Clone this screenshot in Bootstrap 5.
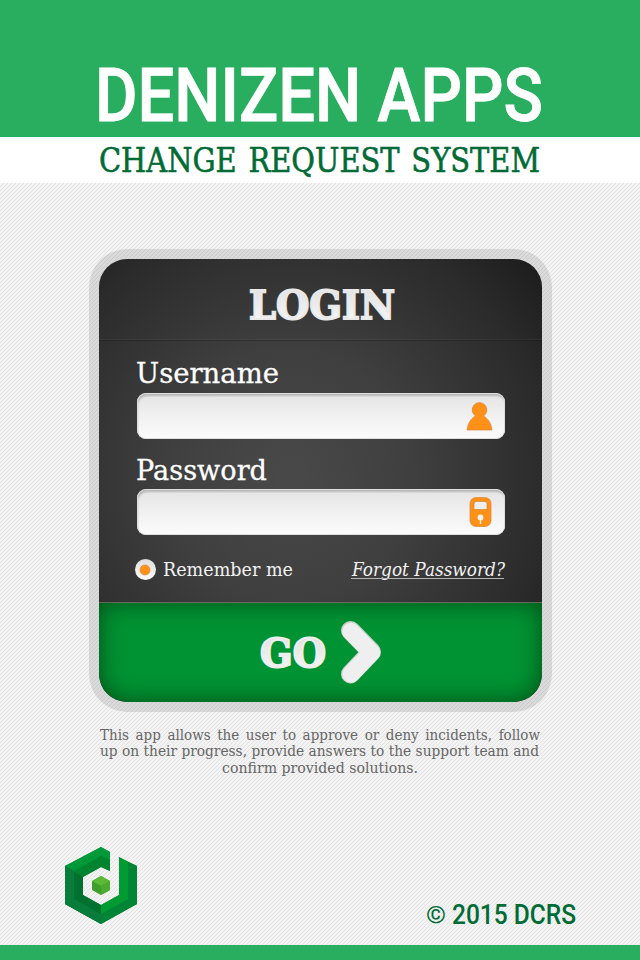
<!DOCTYPE html>
<html lang="en">
<head>
<meta charset="utf-8">
<meta name="viewport" content="width=device-width, initial-scale=1">
<title>Denizen Apps - Change Request System</title>
<link href="https://cdn.jsdelivr.net/npm/bootstrap@5.3.0/dist/css/bootstrap.min.css" rel="stylesheet">
<style>
  body { width: 640px; height: 960px; overflow: hidden; font-family: "DejaVu Serif", serif;
    background: repeating-linear-gradient(135deg, #f3f3f3 0, #f3f3f3 2px, #e2e2e2 2px, #e2e2e2 2.828px); }
  svg { display: block; overflow: visible; }
  svg text { white-space: pre; }
  .brand-bar { height: 137px; background: #29ae60; }
  .sub-bar { height: 46px; background: #fff; }
  .base-bar { height: 15px; background: #29ae60; }
  .slab { font-family: "DejaVu Serif", serif; }
  .sans { font-family: Roboto, sans-serif; }
  .login-frame { width: 463px; height: 463px; margin: 66px 0 0 89px; padding: 10px; border-radius: 38px; background: rgba(0,0,0,.1); }
  .login-panel { height: 443px; border-radius: 28px; overflow: hidden;
    background: radial-gradient(circle 330px at 43% 49%, #494949 0, #3f3f3f 38%, #2b2b2b 78%, #1c1c1c 100%); }
  .panel-head { height: 82px; border-bottom: 1px solid rgba(0,0,0,.22); box-shadow: inset 0 -1px rgba(255,255,255,.05); }
  .panel-fields { height: 261px; padding: 0 37px 0 38px; }
  .user-label { height: 52px; }
  .pass-label { height: 50px; }
  .field-box { height: 46px; border-radius: 9px; padding-right: 12px; background: linear-gradient(#e4e4e4, #fcfcfc);
    box-shadow: inset 0 0 0 1px #dedede, inset 1px 3px 2px rgba(0,0,0,.2); }
  .go-btn { height: 100px; border: 0; border-top: 1px solid #5e6a60; border-radius: 0 0 28px 28px; background: #009333; box-shadow: inset 0 0 24px rgba(0,50,10,.7); }
  .about { margin: 16px 0 0 100px; }
</style>
</head>
<body class="d-flex flex-column">
<header>
  <h1 class="brand-bar m-0">
    <svg width="640" height="137"><text class="sans" x="95" y="121" font-size="74.500" font-weight="500" fill="#fff" stroke="#fff" stroke-width=".8" textLength="448" lengthAdjust="spacingAndGlyphs">DENIZEN APPS</text></svg>
  </h1>
  <h2 class="sub-bar m-0">
    <svg width="640" height="46"><text class="slab" x="99" y="35" font-size="33" font-weight="400" fill="#006b35" stroke="#006b35" stroke-width=".6" word-spacing="3" textLength="441" lengthAdjust="spacingAndGlyphs">CHANGE REQUEST SYSTEM</text></svg>
  </h2>
</header>
<main>
  <form class="login-frame">
    <div class="login-panel d-flex flex-column">
      <div class="panel-head">
        <svg width="443" height="81">
          <defs>
            <linearGradient id="paper" x1="0" y1="0" x2="0" y2="1"><stop offset="0" stop-color="#dedede"/><stop offset="1" stop-color="#fafafa"/></linearGradient>
          </defs>
          <text class="slab" x="150" y="60" font-size="40" font-weight="700" fill="url(#paper)" stroke="#e9e9e9" stroke-width="2" textLength="146" lengthAdjust="spacingAndGlyphs">LOGIN</text>
        </svg>
      </div>
      <div class="panel-fields">
        <div class="user-label"><svg width="368" height="52"><text class="slab" x="-1" y="42" font-size="27" fill="#fff" stroke="#fff" stroke-width=".3" textLength="143" lengthAdjust="spacingAndGlyphs">Username</text></svg></div>
        <div class="field-box d-flex align-items-center justify-content-end">
          <svg width="27" height="32" viewBox="0 0 27 32"><path d="M1 30C2 23 5 18.500 9.500 16A7.300 7.300 0 1 1 17.500 16C22 18.500 25 23 26 30Z" fill="#ff9118" stroke="#d98736" stroke-width=".7"/></svg>
        </div>
        <div class="pass-label"><svg width="368" height="50"><text class="slab" x="-1" y="41" font-size="27" fill="#fff" stroke="#fff" stroke-width=".3" textLength="131" lengthAdjust="spacingAndGlyphs">Password</text></svg></div>
        <div class="field-box d-flex align-items-center justify-content-end">
          <svg width="24" height="30" viewBox="0 0 24 30"><rect x="1" y=".5" width="21" height="29" rx="6" fill="#ff9118" stroke="#d98736" stroke-width=".7"/><path d="M5 12.500V7Q5 4.500 7.500 4.500H15.500Q18 4.500 18 7V12.500Z" fill="#eee" stroke="#d07d25" stroke-width=".6"/><circle cx="11.500" cy="20.500" r="2.900" fill="#f3f3f3"/><path d="M11.500 22V27" stroke="#f3f3f3" stroke-width="1.300"/></svg>
        </div>
        <div class="d-flex">
          <svg width="368" height="60">
            <circle cx="8.500" cy="34.500" r="10.500" fill="url(#paper)"/><circle cx="8" cy="35" r="5" fill="#ff9118" stroke="#d98736" stroke-width=".7"/>
            <text class="slab" x="26" y="41" font-size="18.500" fill="#f2f2f2" textLength="130" lengthAdjust="spacingAndGlyphs">Remember me</text>
            <text class="slab" x="215" y="41" font-size="18.500" font-style="italic" fill="#f2f2f2" textLength="153" lengthAdjust="spacingAndGlyphs">Forgot Password?</text>
            <path d="M214 43.500H367" stroke="#b5b5b5"/>
          </svg>
        </div>
      </div>
      <button type="button" class="go-btn p-0">
        <svg width="443" height="99"><text class="slab" x="161" y="64" font-size="39" font-weight="700" fill="url(#paper)" stroke="#eee" stroke-width="2" textLength="66" lengthAdjust="spacingAndGlyphs">GO</text>
        <path d="M251.500 27.500L272.500 49L251.500 71" fill="none" stroke="#c9d0cb" stroke-width="19" stroke-linecap="round" stroke-linejoin="round"/><path d="M252 28.500L272.500 49.500L252 71" fill="none" stroke="#efefef" stroke-width="17.500" stroke-linecap="round" stroke-linejoin="round"/></svg>
      </button>
    </div>
  </form>
  <div class="about">
    <svg width="440" height="60" class="slab" font-size="14.500" fill="#666">
      <text x="0" y="12" word-spacing="2.500" textLength="440" lengthAdjust="spacingAndGlyphs">This app allows the user to approve or deny incidents, follow</text>
      <text x="0" y="28" textLength="439" lengthAdjust="spacingAndGlyphs">up on their progress, provide answers to the support team and</text>
      <text x="122" y="45" textLength="196" lengthAdjust="spacingAndGlyphs">confirm provided solutions.</text>
    </svg>
  </div>
</main>
<footer class="mt-auto">
  <div class="d-flex">
    <svg width="640" height="100">
      <g transform="translate(50 -10)">
        <path d="M15 31L51 12L60 17V36L51 32L33 42V60L51 70L69 60V22L87 31V69L51 89L15 69Z" fill="#008f33"/>
        <path d="M15 31L33 42V60L51 70V89L15 69Z" fill="#00712e"/>
        <path d="M15 31L51 12L60 17V25L51 21L24 36Z" fill="#00993a"/>
        <path d="M24 36L51 21L60 25V36L51 32L33 42Z" fill="#00842f"/>
        <path d="M15 31L24 36V64L51 79V89L15 69Z" fill="#087c3a"/>
        <path d="M51 79L78 64V27L87 31V69L51 89Z" fill="#008536"/>
        <path d="M51 70L69 60V22L78 27V64L51 79Z" fill="#009b33"/>
        <path d="M51 41L60 46V55L51 60L42 55V46Z" fill="#3f9d2c"/><path d="M51 41L60 46L51 51L42 46Z" fill="#5aba35"/><path d="M51 51L60 46V55L51 60Z" fill="#4bab2f"/>
      </g>
      <text class="sans" x="426" y="78" font-size="23" font-weight="500" fill="#006b35" textLength="20" lengthAdjust="spacingAndGlyphs">©</text>
      <text class="sans" x="452" y="79" font-size="28" font-weight="500" fill="#006b35" textLength="124" lengthAdjust="spacingAndGlyphs">2015 DCRS</text>
    </svg>
  </div>
  <div class="base-bar"></div>
</footer>
<script src="https://cdn.jsdelivr.net/npm/bootstrap@5.3.0/dist/js/bootstrap.bundle.min.js"></script>
</body>
</html>
